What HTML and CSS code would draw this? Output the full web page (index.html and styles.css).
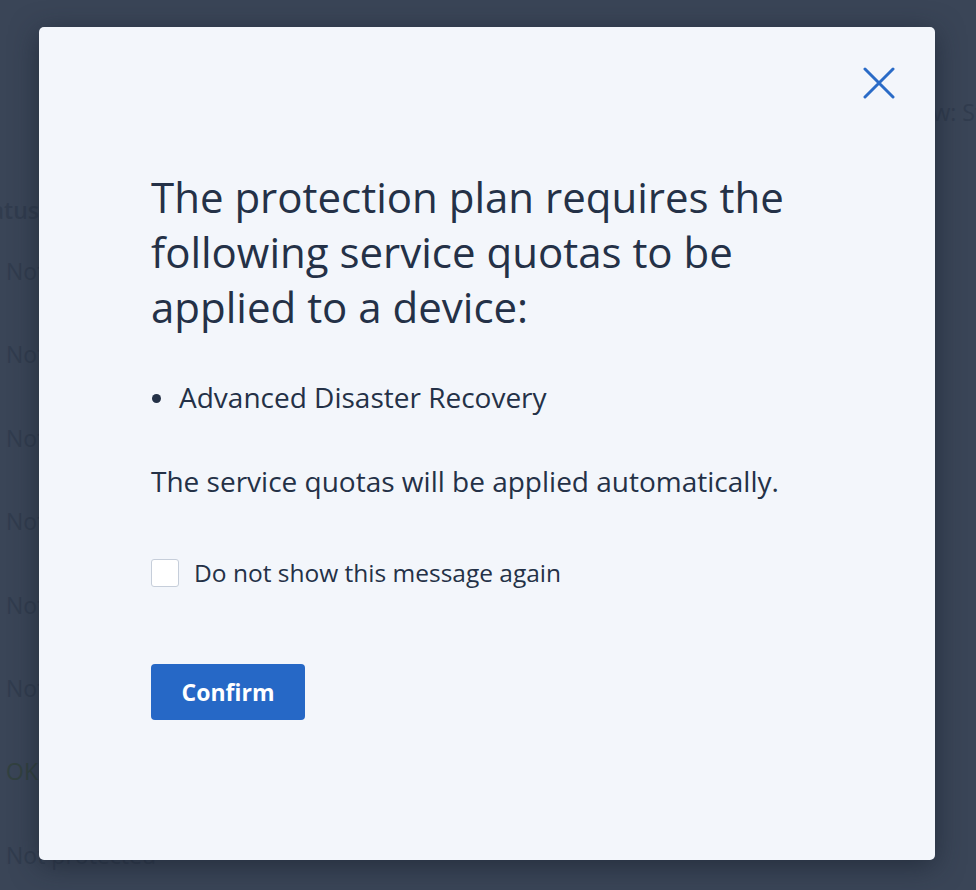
FILE: index.html
```html
<!DOCTYPE html>
<html lang="en">
<head>
<meta charset="utf-8">
<title>Service quotas</title>
<link rel="stylesheet" href="styles.css">
</head>
<body>
<div class="page">
  <div class="toolbar"><span class="view">View: Standard</span></div>
  <div class="table">
    <div class="th">Status</div>
    <div class="td">Not protected</div>
    <div class="td">Not protected</div>
    <div class="td">Not protected</div>
    <div class="td">Not protected</div>
    <div class="td">Not protected</div>
    <div class="td">Not protected</div>
    <div class="td ok">OK</div>
    <div class="td">Not protected</div>
  </div>
</div>
<div class="overlay">
  <div class="modal" role="dialog">
    <button class="close" aria-label="Close">
      <svg width="32" height="32" viewBox="0 0 32 32"><path d="M2 2 L30 30 M30 2 L2 30" stroke="#2a6bc7" stroke-width="3" stroke-linecap="round" fill="none"/></svg>
    </button>
    <div class="body">
      <h1 class="title">The protection plan requires the following service quotas to be applied to a device:</h1>
      <ul class="list">
        <li>Advanced Disaster Recovery</li>
      </ul>
      <p class="text">The service quotas will be applied automatically.</p>
      <label class="check"><span class="box"></span><span>Do not show this message again</span></label>
      <button class="confirm">Confirm</button>
    </div>
  </div>
</div>
</body>
</html>
```
FILE: styles.css
```css
html, body {
  margin: 0;
  padding: 0;
  height: 100%;
  overflow: hidden;
}
body {
  font-family: "Open Sans", "Noto Sans", sans-serif;
  background: #3a4557;
  color: #243147;
}
.page {
  height: 890px;
  color: #313c4e;
  font-size: 23px;
  overflow: hidden;
}
.toolbar {
  display: flex;
  justify-content: flex-start;
  padding-top: 96px;
  padding-left: 900px;
  height: 36px;
  white-space: nowrap;
}
.table {
  margin-top: 58px;
}
.th {
  font-weight: 600;
  margin-left: -31px;
  height: 40px;
  line-height: 40px;
}
.td {
  padding-left: 6px;
  height: 83.4px;
  line-height: 40px;
  padding-top: 21px;
  box-sizing: border-box;
}
.ok { color: #324140; }
.overlay {
  position: absolute;
  inset: 0;
}
.modal {
  position: absolute;
  left: 39px;
  top: 27px;
  width: 896px;
  height: 833px;
  background: #f3f6fb;
  border-radius: 5px;
  box-shadow: 0 6px 28px rgba(22, 30, 44, 0.6);
  box-sizing: border-box;
}
.close {
  position: absolute;
  top: 40px;
  right: 40px;
  width: 32px;
  height: 32px;
  padding: 0;
  border: 0;
  background: none;
  cursor: pointer;
}
.close svg { display: block; }
.body {
  padding: 169px 112px 0;
  margin-top: -27px;
}
.title {
  margin: 0;
  font-size: 42px;
  line-height: 55px;
  font-weight: 400;
  color: #243147;
  max-width: 660px;
}
.list {
  list-style: none;
  margin: 44px 0 0;
  padding: 0;
}
.list li {
  position: relative;
  padding-left: 28px;
  font-size: 28px;
  line-height: 38px;
  color: #243147;
}
.list li::before {
  content: "";
  position: absolute;
  left: 1px;
  top: 16px;
  width: 9px;
  height: 9px;
  border-radius: 50%;
  background: #243147;
}
.text {
  margin: 46px 0 0;
  font-size: 28px;
  line-height: 38px;
  color: #243147;
}
.check {
  display: flex;
  align-items: center;
  gap: 15px;
  margin-top: 59px;
  font-size: 24.5px;
  line-height: 28px;
  color: #243147;
}
.box {
  width: 28px;
  height: 28px;
  box-sizing: border-box;
  border: 1px solid #c6ceda;
  border-radius: 3px;
  background: #fff;
}
.confirm {
  display: block;
  margin-top: 77px;
  width: 154px;
  height: 56px;
  border: 0;
  border-radius: 4px;
  background: #2668c6;
  color: #fff;
  font-family: "Open Sans", "Noto Sans", sans-serif;
  font-size: 23px;
  font-weight: 700;
  cursor: pointer;
}
```
